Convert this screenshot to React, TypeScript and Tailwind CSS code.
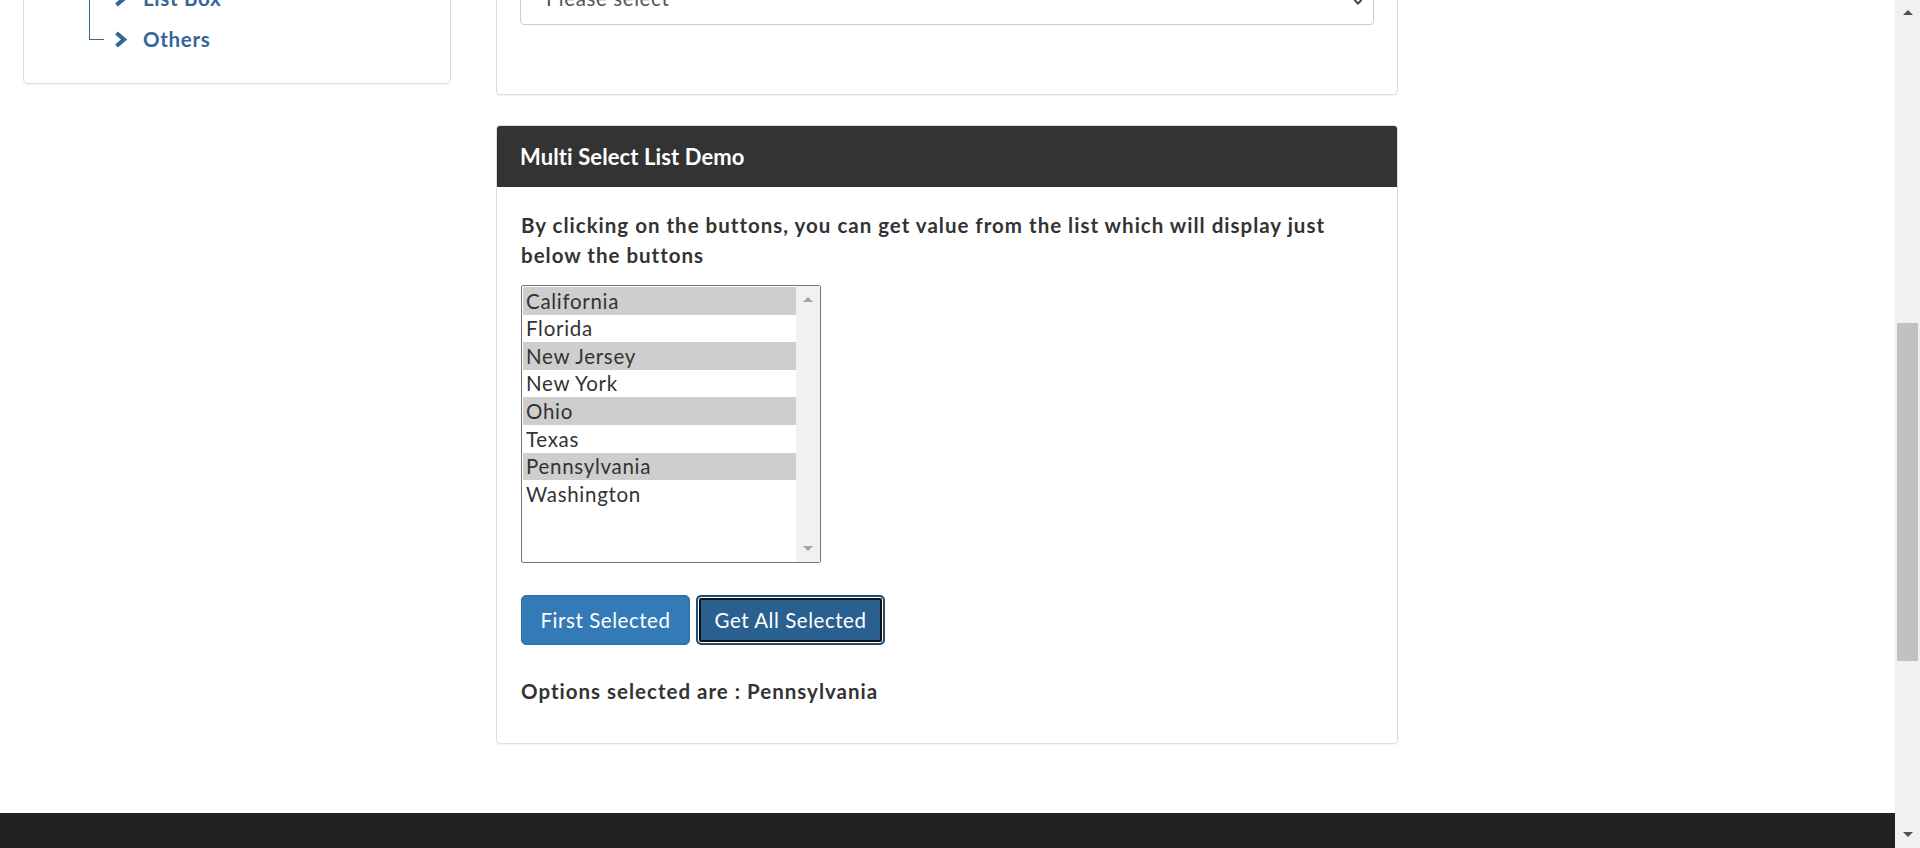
import React from "react";

const states = ["California", "Florida", "New Jersey", "New York", "Ohio", "Texas", "Pennsylvania", "Washington"];
const picked = ["California", "New Jersey", "Ohio", "Pennsylvania"];

function Chevron() {
  return (
    <svg width="14" height="17" viewBox="0 0 14 17" className="shrink-0">
      <polyline points="2.5,2 10,8.5 2.5,15" fill="none" stroke="#336699" strokeWidth="4.2" strokeLinejoin="miter" />
    </svg>
  );
}

function Sidebar() {
  return (
    <aside className="ml-[23px] w-[428px] shrink-0">
      <div className="-mt-[23px] rounded-b-[5px] border border-[#dddddd] pb-[23px] shadow-[0_1px_1px_rgba(0,0,0,0.05)]">
        <div className="flex h-[41px] items-center">
          <div className="relative ml-[65px] h-full w-[15px] border-l border-[#336699]">
            <div className="absolute left-0 top-1/2 w-[15px] border-t border-[#336699]" />
          </div>
          <div className="ml-[10px] flex items-center gap-[15px] text-[20.5px] font-bold tracking-[0.7px] text-[#336699]">
            <Chevron />
            <span>List Box</span>
          </div>
        </div>
        <div className="flex h-[41px] items-start">
          <div className="ml-[65px] h-[21px] w-[15px] border-b border-l border-[#336699]" />
          <div className="ml-[10px] flex h-full items-center gap-[15px] text-[20.5px] font-bold tracking-[0.7px] text-[#336699]">
            <Chevron />
            <span>Others</span>
          </div>
        </div>
      </div>
    </aside>
  );
}

function ListBox() {
  return (
    <div className="mt-[15px] flex h-[278px] w-[300px] rounded-[2px] border border-[#767676] bg-white">
      <div className="flex flex-1 flex-col py-px pl-px">
        {states.map((s) => (
          <div
            key={s}
            className={`flex h-[27.6px] items-center pl-[3px] text-[20.5px] leading-none tracking-[0.7px] text-[#333] ${
              picked.includes(s) ? "bg-[#cecece]" : "bg-white"
            }`}
          >
            {s}
          </div>
        ))}
      </div>
      <div className="flex w-[24px] flex-col items-center justify-between bg-[#f1f1f1] py-[11px]">
        <div className="h-0 w-0 border-x-[5px] border-b-[5px] border-x-transparent border-b-[#a3a3a3]" />
        <div className="h-0 w-0 border-x-[5px] border-t-[5px] border-x-transparent border-t-[#a3a3a3]" />
      </div>
    </div>
  );
}

function MainColumn() {
  return (
    <main className="ml-[45px] flex w-[902px] shrink-0 flex-col">
      <div className="-mt-[22px] rounded-b-[4px] border border-[#dddddd] px-[23px] pb-[69px] shadow-[0_1px_1px_rgba(0,0,0,0.05)]">
        <div className="flex h-[46px] items-center justify-between rounded-[4px] border border-[#cccccc] pl-[25px] pr-[10px] text-[20.5px] tracking-[0.6px] text-[#555]">
          <span className="-mt-[8px]">Please select</span>
          <svg width="10" height="8" viewBox="0 0 10 8">
            <polyline points="1.5,2 5,5.5 8.5,2" fill="none" stroke="#444" strokeWidth="2" />
          </svg>
        </div>
      </div>

      <div className="mt-[30px] rounded-[4px] border border-[#dddddd] shadow-[0_1px_1px_rgba(0,0,0,0.05)]">
        <div className="flex h-[61px] items-center rounded-t-[3px] bg-[#333333] pl-[23px] text-[22px] font-bold tracking-[0.1px] text-white">
          Multi Select List Demo
        </div>
        <div className="px-[24px] pb-[36px] pt-[24px]">
          <p className="text-[20.5px] font-bold leading-[29.5px] tracking-[1px] text-[#333]">
            By clicking on the buttons, you can get value from the list which will display just
            <br />
            below the buttons
          </p>
          <ListBox />
          <div className="mt-[32px] flex gap-[6px]">
            <button className="h-[50px] w-[169px] rounded-[5px] border border-[#2e6da4] bg-[#337ab7] text-[20.5px] tracking-[0.55px] text-white">
              First Selected
            </button>
            <button className="h-[50px] w-[189px] rounded-[5px] border-2 border-[#204d74] bg-[#2a6090] text-[20.5px] tracking-[0.55px] text-white shadow-[inset_0_0_0_1px_#ffffff,inset_0_0_0_3px_#111111]">
              Get All Selected
            </button>
          </div>
          <p className="mt-[32px] text-[20.5px] font-bold leading-[29.5px] tracking-[1px] text-[#333]">
            Options selected are : Pennsylvania
          </p>
        </div>
      </div>
    </main>
  );
}

function PageScrollbar() {
  return (
    <div className="flex w-[25px] shrink-0 flex-col items-center bg-[#f1f1f1]">
      <div className="mt-[10px] h-0 w-0 border-x-[5px] border-b-[5px] border-x-transparent border-b-[#505050]" />
      <div className="mt-[308px] h-[338px] w-[21px] bg-[#c1c1c1]" />
      <div className="mt-auto mb-[11px] h-0 w-0 border-x-[5px] border-t-[5px] border-x-transparent border-t-[#505050]" />
    </div>
  );
}

export default function App() {
  return (
    <div className="flex h-[848px] w-full overflow-hidden bg-white font-['Lato',sans-serif] text-[#333]">
      <div className="flex min-w-0 flex-1 flex-col">
        <div className="flex h-[813px] overflow-hidden">
          <Sidebar />
          <MainColumn />
        </div>
        <footer className="h-[35px] bg-[#222222]" />
      </div>
      <PageScrollbar />
    </div>
  );
}
